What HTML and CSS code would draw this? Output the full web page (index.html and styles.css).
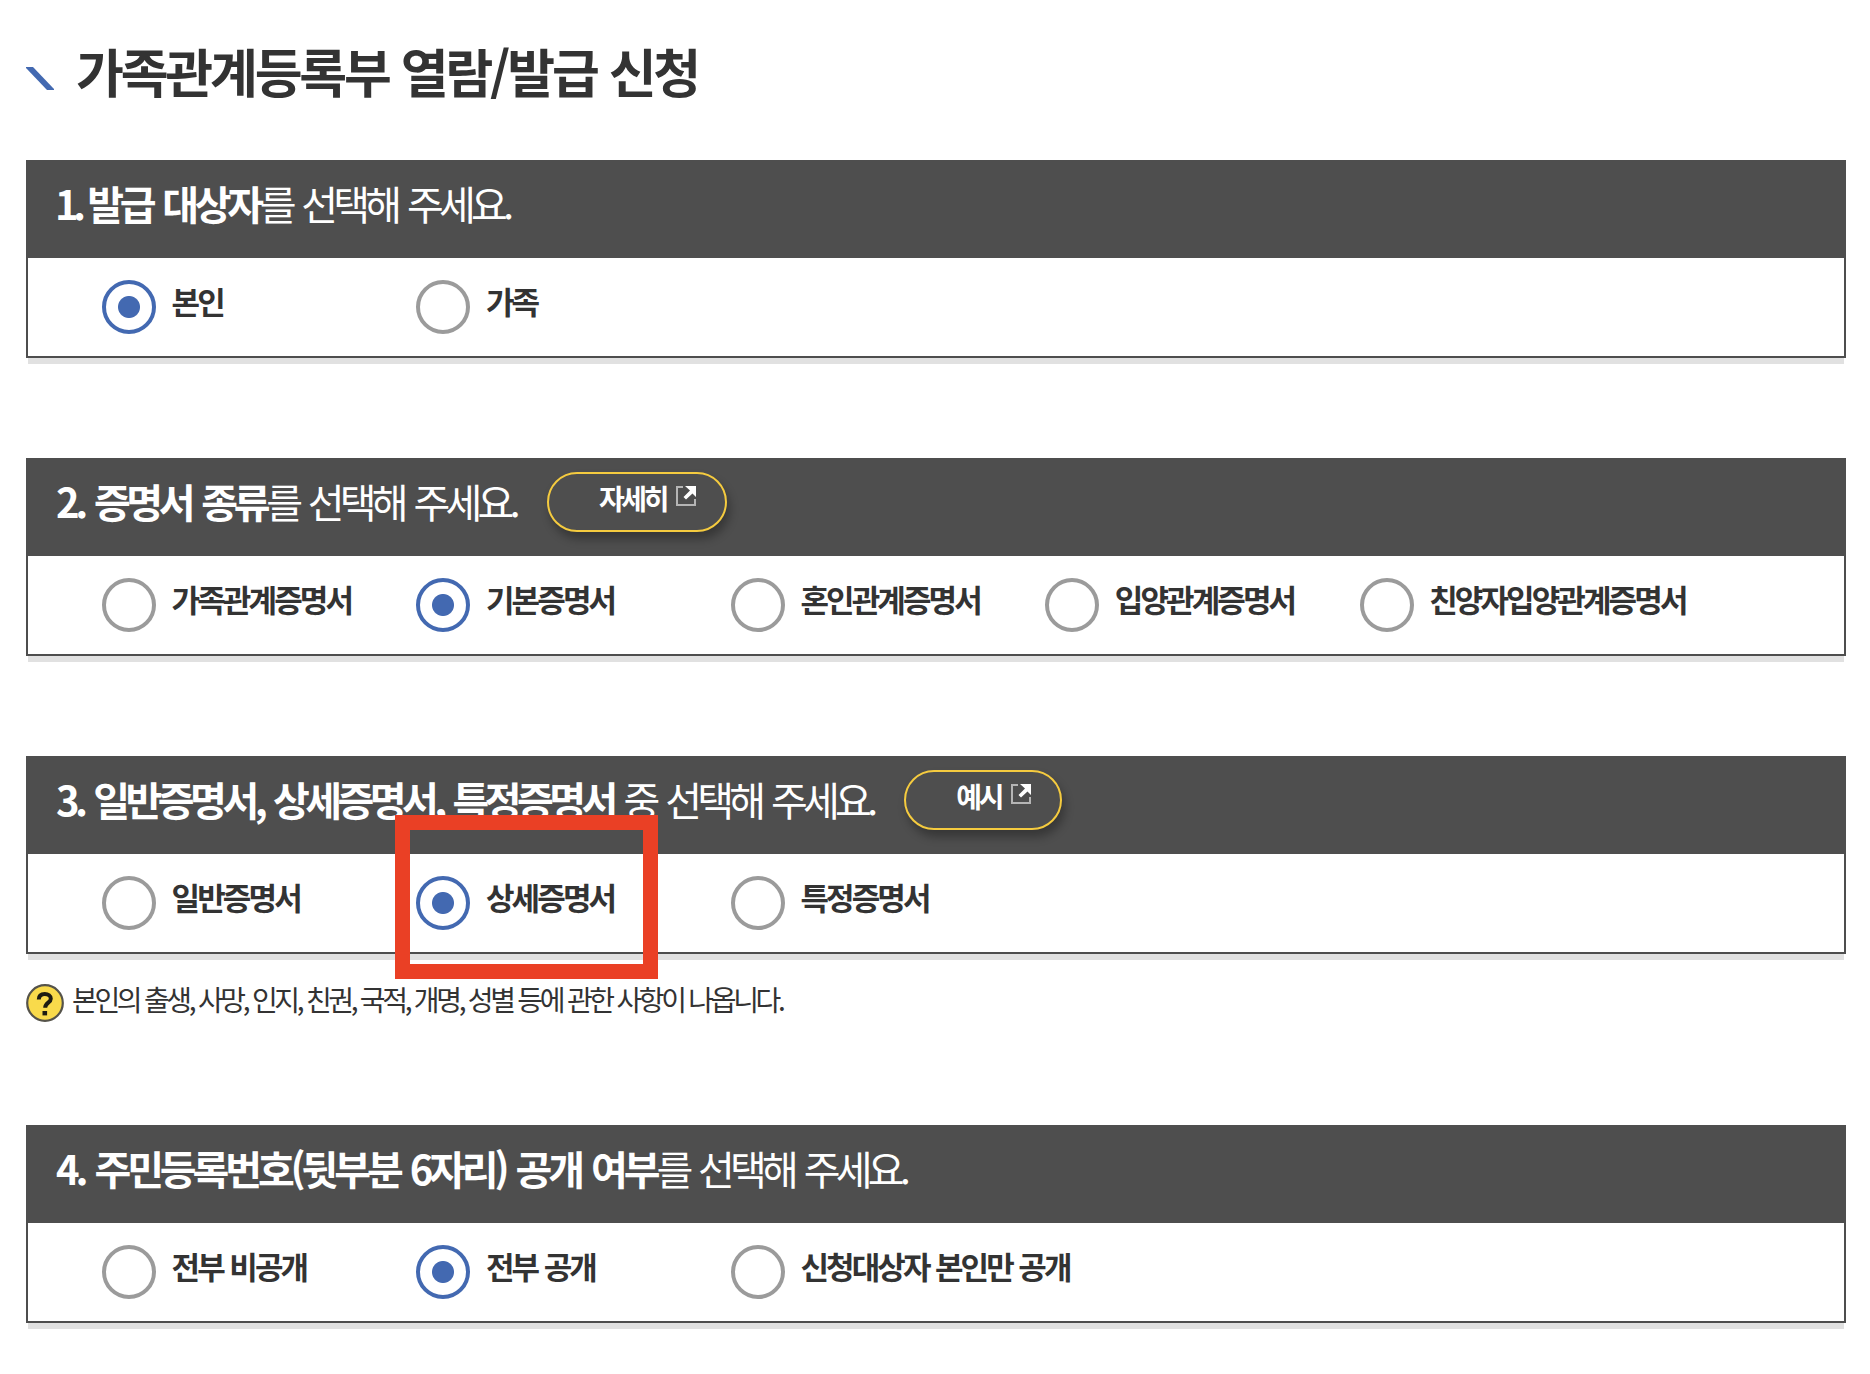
FILE: index.html
```html
<!DOCTYPE html>
<html lang="ko">
<head>
    <meta charset="UTF-8">
    <meta name="viewport" content="width=device-width, initial-scale=1.0">
    <title>가족관계등록부 열람/발급 신청</title>
    <link rel="stylesheet" href="styles.css">
</head>
<body>
    <h1 class="page-title">
        <svg class="title-mark" viewBox="0 0 28 23"><path d="M0 0h7l21 22v1h-7L0 1z" fill="#4369b1"/></svg>
        <span>가족관계등록부 열람/발급 신청</span>
    </h1>

    <!-- 1. 발급 대상자 -->
    <section class="panel">
        <h2 class="panel-head"><span><strong><span class="num-first">1.</span> 발급 대상자</strong>를 선택해 주세요.</span></h2>
        <div class="panel-body">
            <label class="option"><input type="radio" name="target" checked><span>본인</span></label>
            <label class="option"><input type="radio" name="target"><span>가족</span></label>
        </div>
    </section>

    <!-- 2. 증명서 종류 -->
    <section class="panel">
        <h2 class="panel-head">
            <span><strong>2. 증명서 종류</strong>를 선택해 주세요.</span>
            <button type="button" class="btn-more">자세히<svg viewBox="0 0 20 20"><path d="M7 1H1v18h18v-6" fill="none" stroke="#b5b5b5" stroke-width="2"/><path d="M9 0h11v11l-3.500-3.500-6.500 6-2.500-2.500 6.500-6.500z" fill="#fff"/></svg></button>
        </h2>
        <div class="panel-body">
            <label class="option"><input type="radio" name="kind"><span>가족관계증명서</span></label>
            <label class="option"><input type="radio" name="kind" checked><span>기본증명서</span></label>
            <label class="option"><input type="radio" name="kind"><span>혼인관계증명서</span></label>
            <label class="option"><input type="radio" name="kind"><span>입양관계증명서</span></label>
            <label class="option"><input type="radio" name="kind"><span>친양자입양관계증명서</span></label>
        </div>
    </section>

    <!-- 3. 일반/상세/특정 -->
    <section class="panel panel-detail">
        <h2 class="panel-head">
            <span><strong>3. 일반증명서, 상세증명서, 특정증명서</strong> 중 선택해 주세요.</span>
            <button type="button" class="btn-more">예시<svg viewBox="0 0 20 20"><path d="M7 1H1v18h18v-6" fill="none" stroke="#b5b5b5" stroke-width="2"/><path d="M9 0h11v11l-3.500-3.500-6.500 6-2.500-2.500 6.500-6.500z" fill="#fff"/></svg></button>
        </h2>
        <div class="panel-body">
            <label class="option"><input type="radio" name="detail"><span>일반증명서</span></label>
            <label class="option"><input type="radio" name="detail" checked><span>상세증명서</span></label>
            <label class="option"><input type="radio" name="detail"><span>특정증명서</span></label>
        </div>
        <div class="highlight"></div>
    </section>
    <p class="note">
        <svg class="note-icon" viewBox="0 0 38 38"><circle cx="19" cy="19" r="17.800" fill="#f9da4b" stroke="#55534a" stroke-width="2.200"/><path d="M12.800 15.500c0-4 2.500-5.500 6-5.500s6 1.700 6 4.700c0 4-5.600 4-5.600 9" fill="none" stroke="#1d1b12" stroke-width="4"/><rect x="16.500" y="27" width="4.600" height="4.400" fill="#1d1b12"/></svg>
        <span>본인의 출생, 사망, 인지, 친권, 국적, 개명, 성별 등에 관한 사항이 나옵니다.</span>
    </p>

    <!-- 4. 주민등록번호 공개 여부 -->
    <section class="panel panel-open">
        <h2 class="panel-head"><span><strong>4. 주민등록번호(뒷부분 6자리) 공개 여부</strong>를 선택해 주세요.</span></h2>
        <div class="panel-body">
            <label class="option"><input type="radio" name="open"><span>전부 비공개</span></label>
            <label class="option"><input type="radio" name="open" checked><span>전부 공개</span></label>
            <label class="option"><input type="radio" name="open"><span>신청대상자 본인만 공개</span></label>
        </div>
    </section>
</body>
</html>
```
FILE: styles.css
```css
* {
    box-sizing: border-box;
}

body {
    margin: 0;
    padding: 0 24px 0 26px;
    background-color: #fff;
    color: #333;
    font-family: "Noto Sans CJK KR", "Noto Sans", sans-serif;
    white-space: nowrap;
}

.page-title {
    display: flex;
    height: 160px;
    margin: 0;
    padding-top: 31px;
    font-size: 52px;
    font-weight: bold;
    line-height: 80px;
    letter-spacing: -0.061em;
    word-spacing: 0.7px;
}

.title-mark {
    width: 28px;
    height: 23px;
    margin: 36px 22px 0 0;
}

/* Question panels */
.panel {
    position: relative;
    height: 198px;
    margin-bottom: 100px;
    border: 2px solid #4e4e4e;
    border-top: 0;
    box-shadow: 0 8px 0 -2px #e1e1e1;
}

.panel-detail {
    margin-bottom: 30px;
}

.panel-head {
    display: flex;
    height: 98px;
    margin: 0;
    padding: 14px 0 0 28px;
    background-color: #4e4e4e;
    color: #fff;
    font-size: 40px;
    font-weight: normal;
    line-height: 58px;
    letter-spacing: -0.12em;
    word-spacing: 3.3px;
}

.panel-head strong {
    letter-spacing: -0.108em;
    word-spacing: 3px;
}

.panel-detail strong {
    letter-spacing: -0.113em;
}

.panel-open strong {
    letter-spacing: -0.103em;
}

.panel-head .num-first {
    margin: 0 -3px 0 -1px;
    letter-spacing: -0.14em;
}

.panel-body {
    display: flex;
    padding: 22px 0 0 74px;
}

.option {
    display: flex;
    width: 314.4px;
    font-size: 31px;
    font-weight: bold;
    line-height: 42px;
    letter-spacing: -0.093em;
    word-spacing: 0.6px;
}

.option input {
    appearance: none;
    flex: none;
    width: 54px;
    height: 54px;
    margin: 0 15.6px 0 0;
    border: 4px solid #9b9b9b;
    border-radius: 50%;
    background-color: #fff;
}

.option input:checked {
    border-color: #4369b1;
    background: radial-gradient(circle, #4369b1 10.5px, #fff 11.5px);
}

.btn-more {
    display: flex;
    height: 60px;
    margin: 0 0 0 31px;
    padding: 0 29px 0 50px;
    border: 2px solid #f5cb3f;
    border-radius: 30px;
    background-color: #4e4e4e;
    box-shadow: 3px 7px 10px rgba(0, 0, 0, 0.3);
    color: #fff;
    font-family: inherit;
    font-size: 28px;
    font-weight: bold;
    line-height: 49px;
    letter-spacing: -0.12em;
}

.btn-more svg {
    width: 20px;
    height: 20px;
    margin: 12px 0 0 10px;
}

.highlight {
    position: absolute;
    top: 59px;
    left: 367px;
    width: 263px;
    height: 164px;
    border: 15px solid #ea4025;
}

.note {
    display: flex;
    height: 141px;
    margin: 0;
    font-size: 28px;
    line-height: 30px;
    letter-spacing: -0.12em;
    word-spacing: 0.25px;
}

.note-icon {
    width: 38px;
    height: 38px;
    margin-right: 8px;
}
```
